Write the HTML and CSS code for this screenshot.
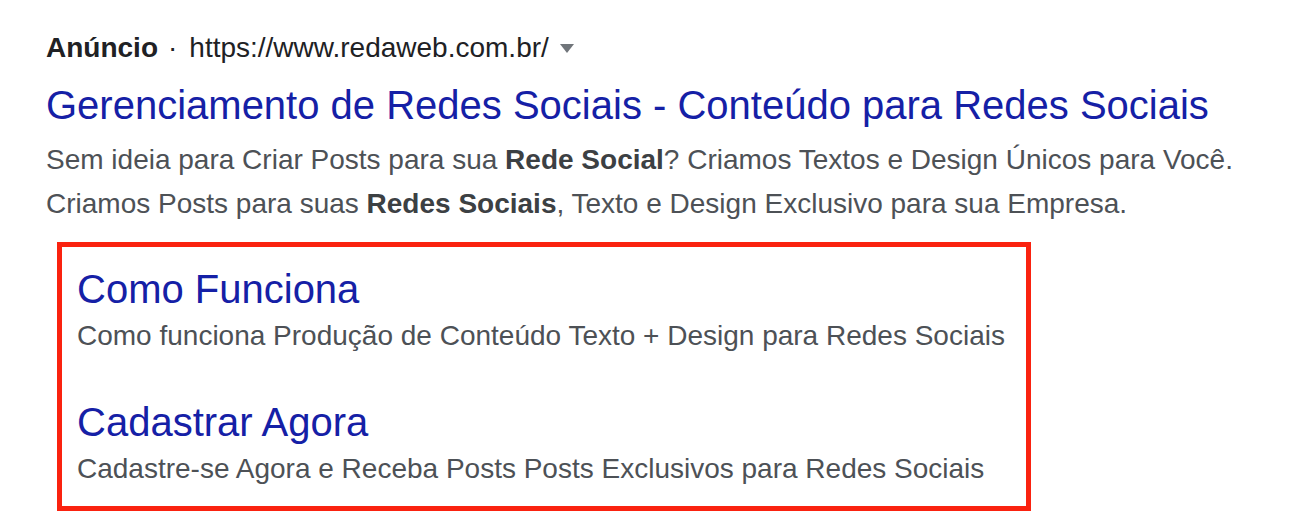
FILE: index.html
```html
<!DOCTYPE html>
<html lang="pt-BR">
<head>
<meta charset="utf-8">
<title>Anúncio</title>
<link rel="stylesheet" href="styles.css">
</head>
<body>
<div class="ad">
  <div class="ad-head"><span class="ad-label">Anúncio</span><span class="ad-dot">·</span><span class="ad-url">https://www.redaweb.com.br/</span><span class="ad-arrow"></span></div>
  <div class="ad-title">Gerenciamento de Redes Sociais - Conteúdo para Redes Sociais</div>
  <div class="ad-desc">Sem ideia para Criar Posts para sua <b>Rede Social</b>? Criamos Textos e Design Únicos para Você.<br>Criamos Posts para suas <b>Redes Sociais</b>, Texto e Design Exclusivo para sua Empresa.</div>
  <div class="sitelinks">
    <div class="sitelink">
      <div class="sitelink-title">Como Funciona</div>
      <div class="sitelink-desc">Como funciona Produção de Conteúdo Texto + Design para Redes Sociais</div>
    </div>
    <div class="sitelink">
      <div class="sitelink-title">Cadastrar Agora</div>
      <div class="sitelink-desc">Cadastre-se Agora e Receba Posts Posts Exclusivos para Redes Sociais</div>
    </div>
  </div>
</div>
</body>
</html>
```

FILE: styles.css
```css
html, body {
  margin: 0;
  padding: 0;
  background: #ffffff;
}
body {
  font-family: "Liberation Sans", Arial, sans-serif;
}
.ad {
  padding: 28px 0 0 46px;
}
.ad-head {
  font-size: 28px;
  line-height: 40px;
  color: #202124;
  white-space: nowrap;
}
.ad-label {
  font-weight: bold;
}
.ad-dot {
  margin: 0 12px 0 10px;
}
.ad-arrow {
  display: inline-block;
  width: 0;
  height: 0;
  border-left: 7.5px solid transparent;
  border-right: 7.5px solid transparent;
  border-top: 9px solid #70757a;
  margin-left: 11px;
  vertical-align: 4px;
}
.ad-title {
  margin-top: 11px;
  font-size: 40px;
  line-height: 52px;
  color: #1520a6;
  white-space: nowrap;
}
.ad-desc {
  margin-top: 7px;
  font-size: 28px;
  line-height: 44px;
  color: #4d5156;
  white-space: nowrap;
}
.ad-desc b {
  color: #3c4043;
}
.sitelinks {
  box-sizing: border-box;
  width: 974px;
  height: 269px;
  margin: 16px 0 0 11px;
  border: 5px solid #fa220f;
  padding: 17px 0 0 15px;
  display: flex;
  flex-direction: column;
  gap: 40px;
}
.sitelink-title {
  font-size: 40px;
  line-height: 51px;
  color: #1520a6;
  white-space: nowrap;
}
.sitelink-desc {
  font-size: 28px;
  line-height: 42px;
  color: #4d5156;
  white-space: nowrap;
}
```
